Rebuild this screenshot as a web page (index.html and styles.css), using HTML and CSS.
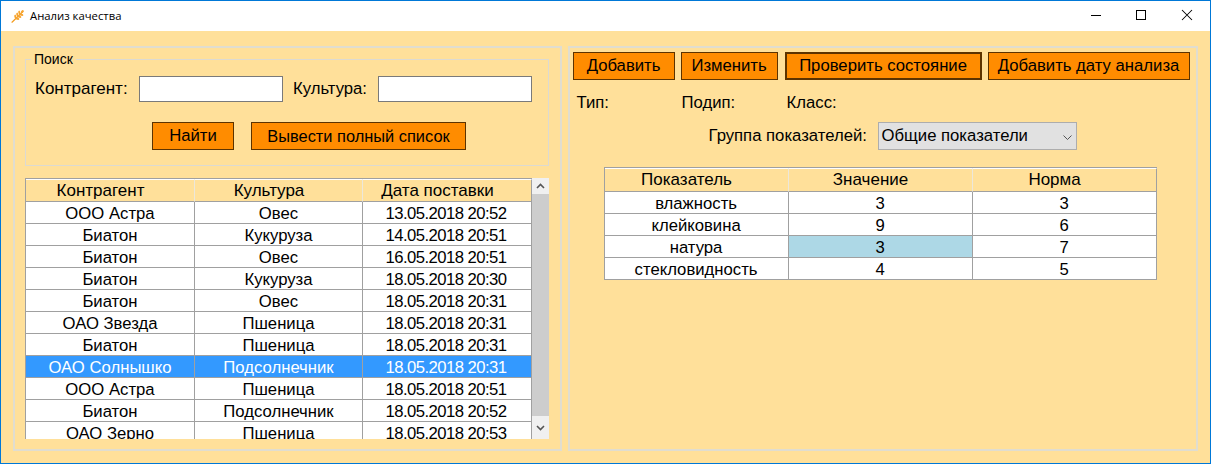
FILE: index.html
```html
<!DOCTYPE html>
<html lang="ru">
<head>
<meta charset="utf-8">
<title>Анализ качества</title>
<link rel="stylesheet" href="styles.css">
</head>
<body>
<div class="window">
  <header class="titlebar">
    <svg class="app-icon" width="14" height="14" viewBox="0 0 14 14"><path d="M1 13.2L12 2.5" fill="none" stroke="#f39c1f" stroke-width="1.2" stroke-linecap="round"/><g fill="#f7a531"><ellipse cx="4.3" cy="7.6" rx="1" ry="2" transform="rotate(-12 4.3 7.6)"/><ellipse cx="6.3" cy="5.6" rx="1" ry="2" transform="rotate(-12 6.3 5.6)"/><ellipse cx="8.3" cy="3.6" rx="1" ry="2" transform="rotate(-12 8.3 3.6)"/><ellipse cx="6.4" cy="9.8" rx="2" ry="1" transform="rotate(12 6.4 9.8)"/><ellipse cx="8.4" cy="7.8" rx="2" ry="1" transform="rotate(12 8.4 7.8)"/><ellipse cx="10.4" cy="5.8" rx="2" ry="1" transform="rotate(12 10.4 5.8)"/><ellipse cx="11.3" cy="2.5" rx="1.6" ry="1.1" transform="rotate(-45 11.3 2.5)"/></g></svg>
    <span class="title">Анализ качества</span>
    <div class="controls">
      <svg class="ctl" width="46" height="30" viewBox="0 0 46 30"><path d="M19 14.5H29" stroke="#000"/></svg>
      <svg class="ctl" width="46" height="30" viewBox="0 0 46 30"><rect x="18.5" y="9.5" width="9" height="9" fill="none" stroke="#000"/></svg>
      <svg class="ctl" width="46" height="30" viewBox="0 0 46 30"><path d="M18 9L28 19M28 9L18 19" stroke="#000" stroke-width="1.05"/></svg>
    </div>
  </header>
  <main class="content">
    <section class="panel panel-left">
      <fieldset class="search">
        <legend class="legend">Поиск</legend>
        <div class="search-row">
          <label class="lbl lbl-agent">Контрагент:</label>
          <input class="input input-agent" type="text">
          <label class="lbl lbl-crop">Культура:</label>
          <input class="input input-crop" type="text">
        </div>
        <div class="search-actions">
          <button class="btn btn-find">Найти</button>
          <button class="btn btn-all">Вывести полный список</button>
        </div>
      </fieldset>
      <div class="list">
        <div class="list-clip">
          <table class="grid grid-list">
            <thead><tr><th>Контрагент</th><th>Культура</th><th>Дата поставки</th></tr></thead>
            <tbody>
              <tr><td>ООО Астра</td><td>Овес</td><td>13.05.2018 20:52</td></tr>
              <tr><td>Биатон</td><td>Кукуруза</td><td>14.05.2018 20:51</td></tr>
              <tr><td>Биатон</td><td>Овес</td><td>16.05.2018 20:51</td></tr>
              <tr><td>Биатон</td><td>Кукуруза</td><td>18.05.2018 20:30</td></tr>
              <tr><td>Биатон</td><td>Овес</td><td>18.05.2018 20:31</td></tr>
              <tr><td>ОАО Звезда</td><td>Пшеница</td><td>18.05.2018 20:31</td></tr>
              <tr><td>Биатон</td><td>Пшеница</td><td>18.05.2018 20:31</td></tr>
              <tr class="selected"><td>ОАО Солнышко</td><td>Подсолнечник</td><td>18.05.2018 20:31</td></tr>
              <tr><td>ООО Астра</td><td>Пшеница</td><td>18.05.2018 20:51</td></tr>
              <tr><td>Биатон</td><td>Подсолнечник</td><td>18.05.2018 20:52</td></tr>
              <tr><td>ОАО Зерно</td><td>Пшеница</td><td>18.05.2018 20:53</td></tr>
            </tbody>
          </table>
        </div>
        <div class="scrollbar">
          <svg class="arrow" width="17" height="16" viewBox="0 0 17 16"><path d="M5 10L8.5 6.5L12 10" fill="none" stroke="#555" stroke-width="1.6"/></svg>
          <div class="thumb"></div>
          <svg class="arrow" width="17" height="23" viewBox="0 0 17 23"><path d="M5 10L8.5 13.5L12 10" fill="none" stroke="#555" stroke-width="1.6"/></svg>
        </div>
      </div>
    </section>
    <section class="panel panel-right">
      <div class="toolbar">
        <button class="btn btn-add">Добавить</button>
        <button class="btn btn-edit">Изменить</button>
        <button class="btn btn-check">Проверить состояние</button>
        <button class="btn btn-date">Добавить дату анализа</button>
      </div>
      <div class="meta">
        <span class="meta-item">Тип:</span>
        <span class="meta-item">Подип:</span>
        <span class="meta-item">Класс:</span>
      </div>
      <div class="group-row">
        <span class="lbl lbl-group">Группа показателей:</span>
        <div class="select">Общие показатели
          <svg class="select-arrow" width="9" height="5" viewBox="0 0 9 5"><path d="M.5 .5L4.5 4.5L8.5 .5" fill="none" stroke="#555" stroke-width="1"/></svg>
        </div>
      </div>
      <table class="grid grid-values">
        <thead><tr><th>Показатель</th><th>Значение</th><th>Норма</th></tr></thead>
        <tbody>
          <tr><td>влажность</td><td>3</td><td>3</td></tr>
          <tr><td>клейковина</td><td>9</td><td>6</td></tr>
          <tr><td>натура</td><td class="flag">3</td><td>7</td></tr>
          <tr><td>стекловидность</td><td>4</td><td>5</td></tr>
        </tbody>
      </table>
    </section>
  </main>
</div>
</body>
</html>
```
FILE: styles.css
```css
* { box-sizing: border-box; }
html, body { margin: 0; padding: 0; }
body {
  width: 1211px;
  height: 464px;
  overflow: hidden;
  font-family: "Liberation Sans", Arial, sans-serif;
  font-size: 16.7px;
  color: #000;
}
.window {
  width: 1211px;
  height: 464px;
  border: 1px solid #0078d7;
  display: flex;
  flex-direction: column;
  background: #ffe09a;
}
.titlebar {
  height: 30px;
  background: #fff;
  display: flex;
  align-items: center;
  padding-left: 10px;
  flex: none;
}
.app-icon { flex: none; }
.title {
  margin-left: 5px;
  margin-bottom: 2px;
  font-family: "Open Sans", "Noto Sans", sans-serif;
  font-size: 11.3px;
}
.controls { margin-left: auto; display: flex; }
.ctl { display: block; }
.content {
  flex: 1;
  display: flex;
  gap: 6px;
  padding: 15px 12px 12px;
  min-height: 0;
}
.panel { border: 2px solid #e0ddd0; }
.panel-left { width: 549px; padding: 4px 10px 0; }
.panel-right { width: 631px; padding: 4px 6px 0 3px; }
.search {
  margin: 0 0 12px;
  padding: 0;
  height: 114px;
  width: 524px;
  border: 1px solid #dcdad2;
  min-width: 0;
}
.legend {
  margin-left: 5px;
  padding: 0 3px;
  font-size: 14px;
  line-height: 15px;
}
.search-row {
  display: flex;
  align-items: center;
  padding: 9px 0 0 9px;
}
.lbl { white-space: nowrap; }
.lbl-agent { width: 104px; font-size: 17px; }
.lbl-crop { width: 85px; margin-left: 10px; }
.lbl-group { width: 158px; }
.input {
  height: 26px;
  background: #fff;
  border: 1px solid #7a7a7a;
  padding: 0;
  margin: 0;
  outline: none;
}
.input-agent { width: 144px; }
.input-crop { width: 154px; }
.search-actions {
  display: flex;
  gap: 17px;
  padding: 20px 0 0 126px;
}
.btn {
  height: 28px;
  background: #ff8c00;
  border: 1px solid #5c3300;
  font: inherit;
  color: #000;
  padding: 0;
}
.btn-find { width: 82px; }
.btn-all { width: 215px; font-size: 16.4px; }
.list { display: flex; height: 261px; width: 524px; }
.list-clip {
  width: 507px;
  height: 261px;
  overflow: hidden;
  flex: none;
}
.grid {
  border-collapse: separate;
  border-spacing: 0;
  table-layout: fixed;
  border-top: 1px solid #a0a0a0;
  border-left: 1px solid #a0a0a0;
  background: #fff;
}
.grid th, .grid td {
  padding: 2px 0 0;
  font-weight: 400;
  text-align: center;
  border-right: 1px solid #a0a0a0;
  border-bottom: 1px solid #a0a0a0;
  height: 22px;
  line-height: 19px;
  white-space: nowrap;
}
.grid th {
  height: 23px;
  padding: 0 19px 0 0;
  font-size: 17px;
  line-height: 21px;
  background: #ffe09a;
  border-right-color: #ece7da;
  border-top: 1px solid #ffffff;
}
.grid th:last-child { border-right-color: #a0a0a0; }
.grid-list td:last-child { letter-spacing: -0.55px; padding-right: 2px; }
.grid-list th:nth-child(1) { width: 169px; }
.grid-list th:nth-child(2) { width: 168px; }
.grid-list { width: 507px; }
.grid-values { width: 553px; margin: 17px 0 0 31px; }
.grid-values th { height: 24px; line-height: 22px; }
.grid-values th:nth-child(1) { width: 184px; }
.grid-values th:nth-child(2) { width: 184px; }
.selected td { background: #3399ff; color: #fff; }
.flag { background: #add8e6; }
.scrollbar {
  width: 17px;
  height: 261px;
  background: #f0f0f0;
  display: flex;
  flex-direction: column;
  flex: none;
}
.arrow { display: block; flex: none; }
.thumb { flex: 1; background: #cdcdcd; }
.toolbar { display: flex; }
.toolbar .btn-add { width: 102px; }
.toolbar .btn-edit { width: 97px; margin-left: 6px; }
.toolbar .btn-check { width: 197px; margin-left: 7px; border-width: 2px; }
.toolbar .btn-date { width: 202px; margin-left: 6px; }
.meta {
  display: flex;
  padding: 13px 0 0 4px;
  line-height: 20px;
}
.meta-item { width: 105px; }
.group-row {
  display: flex;
  align-items: center;
  padding: 9px 0 0 136px;
}
.select {
  position: relative;
  width: 199px;
  height: 28px;
  margin-left: 11px;
  background: #e1e1e1;
  border: 1px solid #adadad;
  line-height: 26px;
  padding-left: 3px;
}
.select-arrow { position: absolute; right: 4px; top: 12px; }
```
